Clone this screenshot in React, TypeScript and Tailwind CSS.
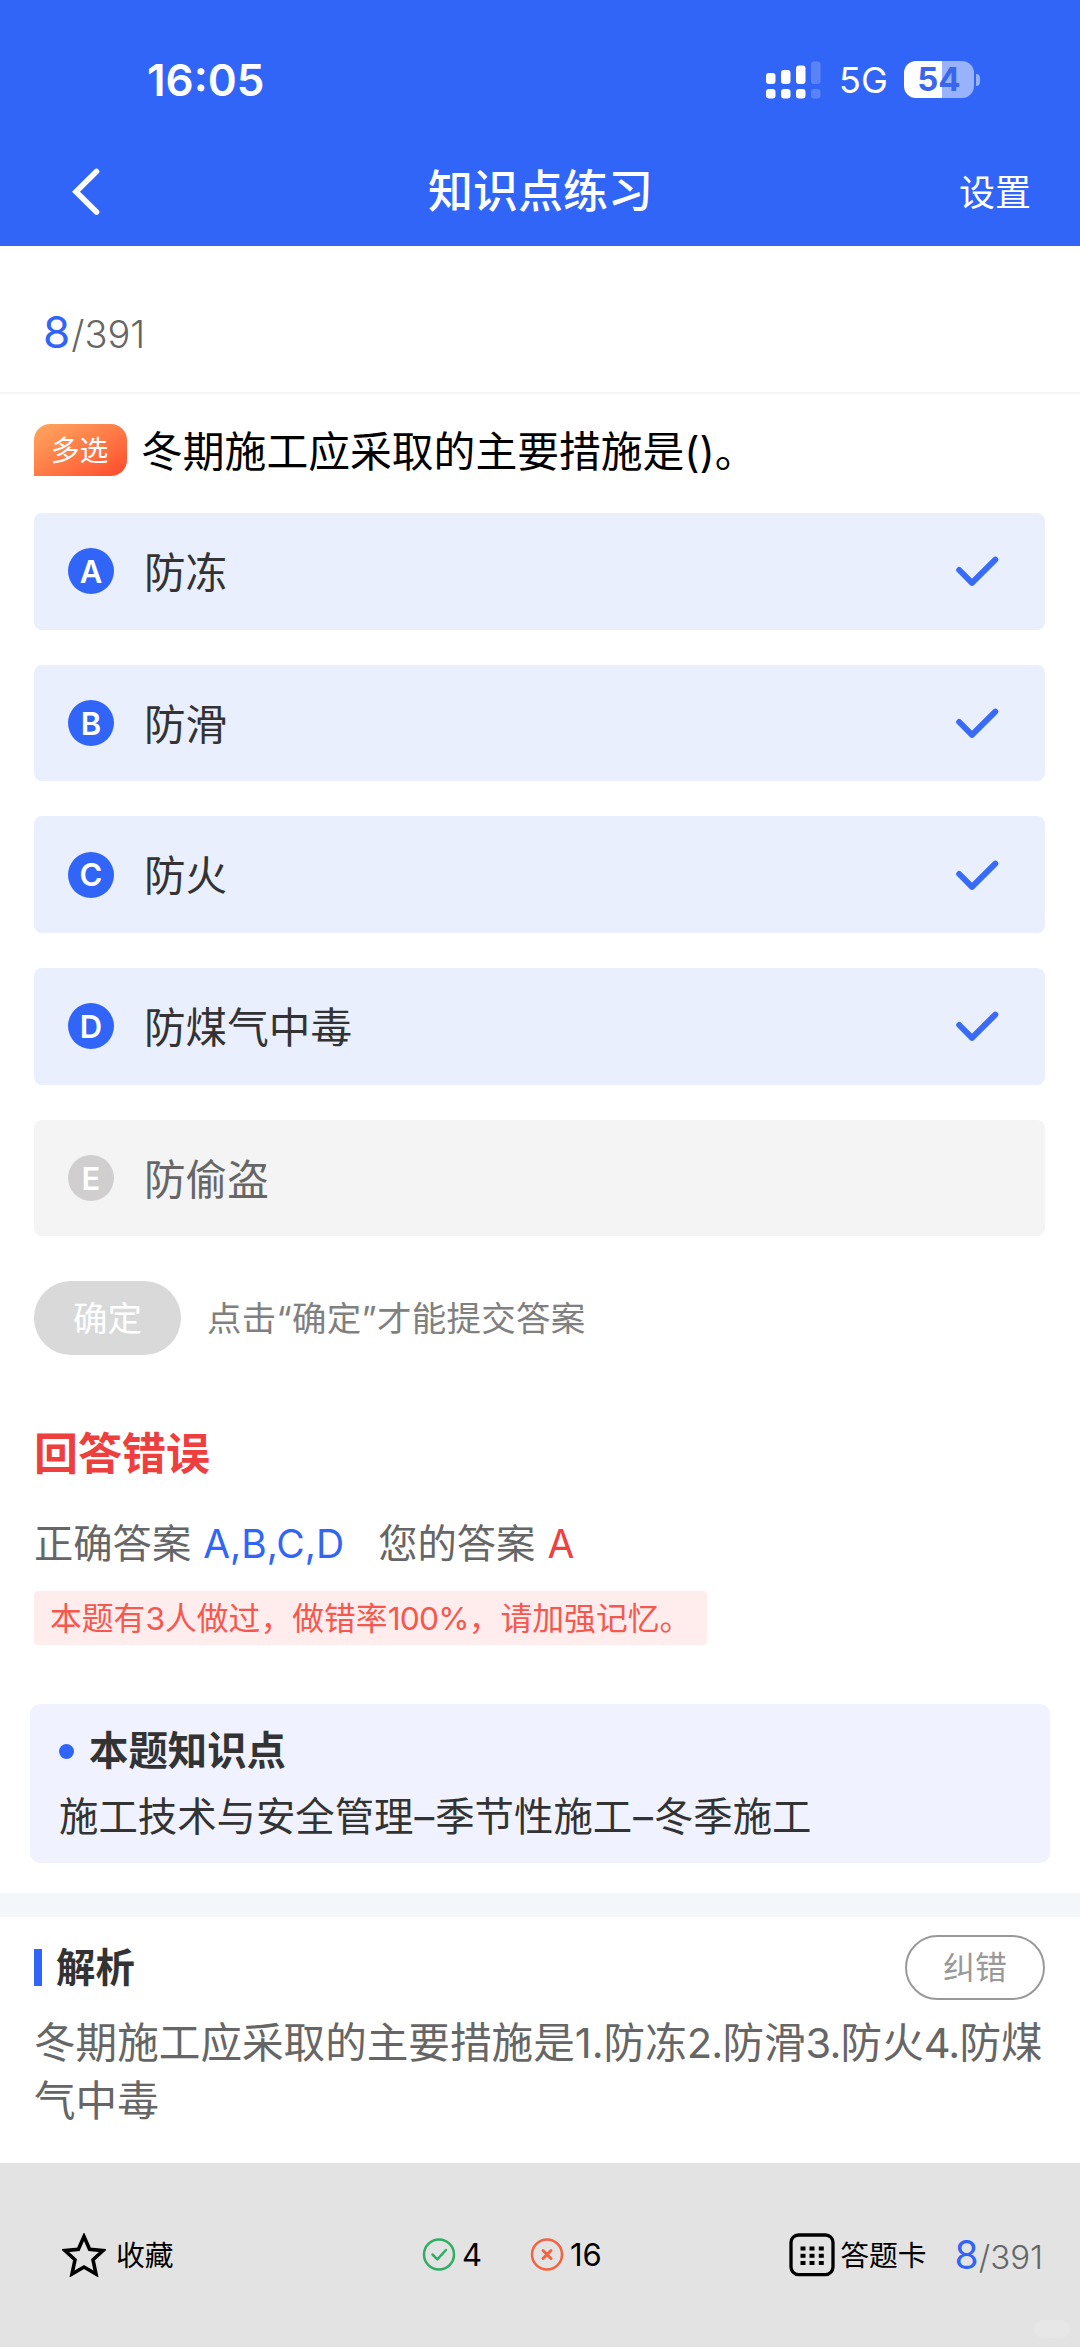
import React from 'react'

interface OptionItem {
  id: string
  label: string
  correct: boolean
}

const options: OptionItem[] = [
  { id: 'A', label: '防冻', correct: true },
  { id: 'B', label: '防滑', correct: true },
  { id: 'C', label: '防火', correct: true },
  { id: 'D', label: '防煤气中毒', correct: true },
  { id: 'E', label: '防偷盗', correct: false }
]

const StatusBar: React.FC = () => (
  <div className="flex h-[138px] items-start pl-[147px] pr-[100px] pt-[53px]">
    <span className="text-[44px] leading-[54px] font-semibold">16:05</span>
    <div className="ml-auto flex items-center pt-[7px]">
      <svg className="h-[38px] w-[55px]" viewBox="0 0 55 38" fill="#fff">
        <rect x="0" y="12" width="9.5" height="11" rx="3" />
        <rect x="15" y="9" width="9.5" height="14" rx="3" />
        <rect x="30" y="4.5" width="9.5" height="18.5" rx="3" />
        <rect x="45" y="0.5" width="9.5" height="22.5" rx="3" opacity="0.2" />
        <rect x="0" y="28" width="9.5" height="9.5" rx="3" />
        <rect x="15" y="28" width="9.5" height="9.5" rx="3" />
        <rect x="30" y="28" width="9.5" height="9.5" rx="3" />
        <rect x="45" y="28" width="9.5" height="9.5" rx="3" opacity="0.2" />
      </svg>
      <span className="ml-[18px] w-[47px] pt-[1px] text-[36px] leading-[38px]">5G</span>
      <div className="ml-[18px] h-[37px] w-[70px] rounded-[12px] bg-linear-to-r from-white from-54% to-[#98b2fb] to-54% text-center text-[33px] leading-[36px] font-bold text-[#3a66ee]">
        54
      </div>
      <div className="ml-[2px] h-[12px] w-[4px] rounded-r-full bg-[#98b2fb]" />
    </div>
  </div>
)

const Header: React.FC = () => (
  <header className="h-[246px] bg-[#3165f7] text-white">
    <StatusBar />
    <div className="flex h-[108px] items-center justify-between pl-[71px] pr-[49px]">
      <button className="w-[52px]">
        <svg className="h-[48px] w-[30px]" viewBox="0 0 30 48" fill="none" stroke="#fff" strokeWidth="5.6">
          <path d="M25.5 3.5 L5 23.7 L25.5 44" strokeLinecap="round" strokeLinejoin="miter" />
        </svg>
      </button>
      <h1 className="text-[45px] leading-[60px] font-medium">知识点练习</h1>
      <button className="w-[73px] pt-[1px] text-right text-[36px] leading-[48px]">设置</button>
    </div>
  </header>
)

const Option: React.FC<{ item: OptionItem }> = ({ item }) => (
  <li
    className={`flex h-[116.7px] items-center rounded-[8px] pl-[34px] pr-[45px] ${
      item.correct ? 'bg-[#eaeffe] text-[#333]' : 'bg-[#f4f4f4] text-[#666]'
    }`}
  >
    <span
      className={`flex size-[46px] items-center justify-center rounded-full text-[31px] leading-none font-semibold text-white ${
        item.correct ? 'bg-[#3165f7]' : 'bg-[#d0cece]'
      }`}
    >
      {item.id}
    </span>
    <span className="ml-[30px] pt-[3px] text-[41.6px] leading-[60px]">{item.label}</span>
    {item.correct && (
      <svg className="ml-auto h-[32px] w-[44px]" viewBox="0 0 44 32" fill="none" stroke="#3a6bf5" strokeWidth="6">
        <path d="M3.2 15 L16 27.8 L39.3 4.6" strokeLinecap="round" strokeLinejoin="round" />
      </svg>
    )}
  </li>
)

const Footer: React.FC = () => (
  <footer className="relative flex h-[184px] items-start bg-[#e3e3e3] pl-[62px] text-black">
    <div className="flex h-[184px] items-center">
      <svg className="h-[44px] w-[44px]" viewBox="0 0 44 44" fill="none" stroke="#000" strokeWidth="3.6">
        <path d="M22 3.5 L27.6 16.2 L41 17.6 L31 26.8 L34 41 L22 34 L10 41 L13 26.8 L3 17.6 L16.4 16.2 Z" />
      </svg>
      <span className="ml-[10px] w-[58px] pt-[1px] text-[28.8px] leading-[40px]">收藏</span>
    </div>
    <div className="ml-[248px] flex h-[184px] items-center text-[31px] leading-[40px]">
      <svg className="size-[34px]" viewBox="0 0 34 34" fill="none" stroke="#2fae61" strokeWidth="2.5">
        <circle cx="17" cy="16.5" r="15" />
        <path d="M10.5 16.5 L15.3 21.3 L24 12" strokeLinecap="round" strokeLinejoin="round" />
      </svg>
      <span className="ml-[6px] w-[68px]">4</span>
      <svg className="size-[34px]" viewBox="0 0 34 34" fill="none" stroke="#f4623f" strokeWidth="2.5">
        <circle cx="17" cy="16.5" r="15" />
        <path d="M13 12.5 L21 20.5 M21 12.5 L13 20.5" strokeWidth="3" strokeLinecap="round" />
      </svg>
      <span className="ml-[6px]">16</span>
    </div>
    <div className="ml-auto flex h-[184px] items-center pr-[37px]">
      <svg className="h-[44px] w-[46px]" viewBox="0 0 46 44">
        <rect x="2" y="2" width="42" height="39.6" rx="7.5" fill="none" stroke="#000" strokeWidth="3.3" />
        {[11.5, 20.5, 29.8].map(x =>
          [13.5, 20.8, 28].map(y => <rect key={`${x}-${y}`} x={x} y={y} width="5" height="4" fill="#000" />)
        )}
      </svg>
      <span className="ml-[5px] pt-[1px] text-[28.8px] leading-[40px]">答题卡</span>
      <div className="ml-[28px] flex items-baseline pt-[1px] leading-[48px] text-[#666]">
        <span className="text-[39px] text-[#3165f7]">8</span>
        <span className="text-[33px] font-light">/391</span>
      </div>
    </div>
    <div className="absolute right-[10px] bottom-[9px] h-[18px] w-[36px] rounded-full bg-[#e7e7e7]" />
  </footer>
)

const App: React.FC = () => {
  return (
    <div className="flex h-[2347px] w-[1080px] flex-col overflow-hidden bg-white font-['Inter','Noto_Sans_CJK_SC',sans-serif] whitespace-nowrap">
      <Header />

      {/* 进度 */}
      <div className="flex h-[148px] items-baseline border-b-2 border-[#f6f6f6] pl-[43px] pt-[56px] leading-[60px] text-[#666]">
        <span className="text-[44px] text-[#3165f7]">8</span>
        <span className="ml-[1px] text-[38px] font-light">/391</span>
      </div>

      {/* 题目 */}
      <main className="pl-[34px] pr-[35px]">
        <div className="flex h-[119px] items-start pt-[30px]">
          <span className="flex h-[52px] w-[93px] items-center justify-center rounded-t-[16px] rounded-br-[16px] bg-linear-to-br from-[#ffa660] to-[#ff462c] pr-[2px] pt-[2px] text-[28.8px] leading-[40px] text-white">
            多选
          </span>
          <span className="ml-[14px] pt-[2px] text-[41.8px] leading-[52px] text-black">冬期施工应采取的主要措施是()。</span>
        </div>

        <ul className="flex flex-col gap-[35px]">
          {options.map(item => (
            <Option key={item.id} item={item} />
          ))}
        </ul>

        <div className="mt-[45px] flex items-center">
          <button className="h-[74px] w-[147px] rounded-full bg-[#d9d9d9] pt-[1px] text-[34.5px] text-white">确定</button>
          <span className="ml-[26px] pt-[1px] text-[34.5px] leading-[73px] tracking-[0.25px] text-[#808080]">
            点击“确定”才能提交答案
          </span>
        </div>

        <h2 className="mt-[69px] text-[44px] leading-[60px] font-bold text-[#ee3f3f]">回答错误</h2>
        <div className="mt-[30px] flex text-[39.3px] leading-[60px] text-[#666]">
          <span>正确答案</span>
          <span className="ml-[12px] w-[175px] text-[39px] text-[#3165f7]">A,B,C,D</span>
          <span>您的答案</span>
          <span className="ml-[12px] text-[39px] text-[#f04040]">A</span>
        </div>
        <div className="mt-[17px] h-[54px] w-[673px] rounded-[4px] bg-[#ffecec] pl-[16px] pt-[1px] text-[31.8px] leading-[54px] text-[#f5584f]">
          本题有3人做过，做错率<span className="tracking-[-0.8px]">100%</span>，请加强记忆。
        </div>
      </main>

      {/* 知识点 */}
      <section className="mx-[30px] mt-[59px] h-[159px] rounded-[10px] bg-[#f0f3ff] pl-[29px] pt-[17px] text-[39.4px] leading-[60px] text-[#333]">
        <h3 className="flex items-center font-bold">
          <span className="mr-[15px] size-[15px] rounded-full bg-[#3165f7]" />
          本题知识点
        </h3>
        <p className="mt-[6px]">
          施工技术与安全管理<span className="mx-[1px]">–</span>季节性施工<span className="mx-[1px]">–</span>冬季施工
        </p>
      </section>

      <div className="mt-[30px] h-[24px] bg-[#f4f7f9]" />

      {/* 解析 */}
      <section className="flex-1 pl-[34px] pr-[35px] pt-[18px]">
        <div className="flex h-[65px] items-center">
          <span className="h-[37px] w-[8px] bg-[#3165f7]" />
          <h3 className="ml-[14px] text-[39.4px] leading-[60px] font-bold text-[#333]">解析</h3>
          <button className="ml-auto h-[65px] w-[140px] rounded-full border-2 border-[#999] text-[32px] leading-[60px] text-[#999]">
            纠错
          </button>
        </div>
        <p className="mt-[14px] text-[41.6px] leading-[58px] text-[#666]">
          冬期施工应采取的主要措施是1.防冻<span className="tracking-[-0.9px]">2.</span>防滑
          <span className="tracking-[-0.9px]">3.</span>防火<span className="tracking-[-0.9px]">4.</span>防煤
          <br />
          气中毒
        </p>
      </section>

      <Footer />
    </div>
  )
}

export default App
